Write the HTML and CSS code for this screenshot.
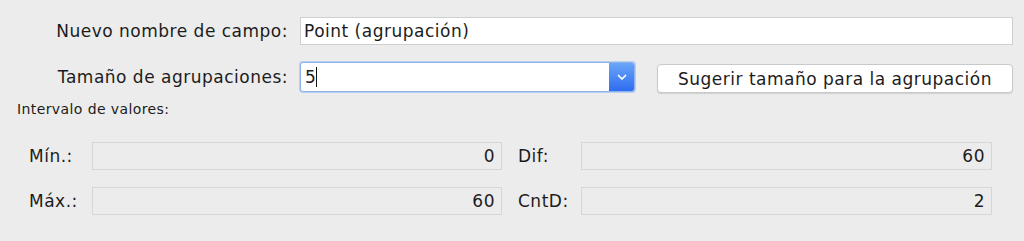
FILE: index.html
```html
<!DOCTYPE html>
<html lang="es">
<head>
<meta charset="utf-8">
<title>Agrupación</title>
<link rel="stylesheet" href="styles.css">
</head>
<body>
<div class="dialog">
  <div class="top">
    <label class="lbl">Nuevo nombre de campo:</label>
    <div class="input">Point (agrupación)</div>
    <label class="lbl">Tamaño de agrupaciones:</label>
    <div class="row2">
      <div class="combo">
        <div class="combo-text">5<span class="caret"></span></div>
        <div class="combo-btn">
          <svg width="10" height="7" viewBox="0 0 10 7"><path d="M1.5 1.5 L5 5 L8.5 1.5" fill="none" stroke="#fff" stroke-width="1.7" stroke-linecap="round" stroke-linejoin="round"/></svg>
        </div>
      </div>
      <button class="btn">Sugerir tamaño para la agrupación</button>
    </div>
  </div>
  <div class="section">Intervalo de valores:</div>
  <div class="range">
    <div class="pair"><span class="plbl">Mín.:</span><div class="ro">0</div></div>
    <div class="pair"><span class="plbl">Dif:</span><div class="ro">60</div></div>
    <div class="pair"><span class="plbl">Máx.:</span><div class="ro">60</div></div>
    <div class="pair"><span class="plbl">CntD:</span><div class="ro">2</div></div>
  </div>
</div>
</body>
</html>
```
FILE: styles.css
```css
html, body {
  margin: 0;
  padding: 0;
  background: #ececec;
}
.dialog {
  width: 1024px;
  height: 241px;
  font-family: "DejaVu Sans", "Liberation Sans", sans-serif;
  color: #1c1c1c;
  box-sizing: border-box;
  padding-top: 17px;
  font-size: 17px;
  letter-spacing: 0.5px;
}
.top {
  display: grid;
  grid-template-columns: 288px 713px;
  column-gap: 12px;
  row-gap: 16px;
  align-items: center;
}
.lbl {
  text-align: right;
}
.input {
  height: 28px;
  box-sizing: border-box;
  background: #fff;
  border: 1px solid #cfcfcf;
  line-height: 26px;
  padding-left: 3px;
}
.row2 {
  display: flex;
  align-items: center;
  gap: 22px;
}
.combo {
  width: 335px;
  height: 30px;
  box-sizing: border-box;
  display: flex;
  border: 1px solid #8fb2ea;
  border-radius: 3px;
  background: #fff;
  box-shadow: 0 0 0 1px #b9cff1;
  overflow: hidden;
}
.combo-text {
  flex: 1;
  line-height: 28px;
  padding-left: 4px;
  display: flex;
  align-items: center;
}
.caret {
  display: inline-block;
  width: 1px;
  height: 20px;
  background: #111;
  margin-left: 0;
}
.combo-btn {
  width: 25px;
  background: linear-gradient(#6aa5f8, #2f6df1);
  display: flex;
  align-items: center;
  justify-content: center;
}
.btn {
  width: 356px;
  height: 29px;
  margin-top: 3px;
  background: #fff;
  border: 1px solid #c9c9c9;
  border-radius: 4px;
  box-shadow: 0 1px 1px rgba(0,0,0,0.12);
  font-family: inherit;
  font-size: 17px;
  letter-spacing: 0.5px;
  color: #1c1c1c;
  padding: 0;
}
.section {
  font-size: 14px;
  letter-spacing: 0.4px;
  padding-left: 17px;
  margin-top: 8px;
  height: 17px;
  line-height: 17px;
}
.range {
  display: grid;
  grid-template-columns: 473px 474px;
  column-gap: 16px;
  row-gap: 17px;
  padding-left: 29px;
  margin-top: 24px;
}
.pair {
  display: flex;
  align-items: center;
}
.plbl {
  width: 63px;
}
.ro {
  flex: 1;
  height: 28px;
  box-sizing: border-box;
  border: 1px solid #d6d6d6;
  background: #ececec;
  text-align: right;
  line-height: 26px;
  padding-right: 6px;
}
```
